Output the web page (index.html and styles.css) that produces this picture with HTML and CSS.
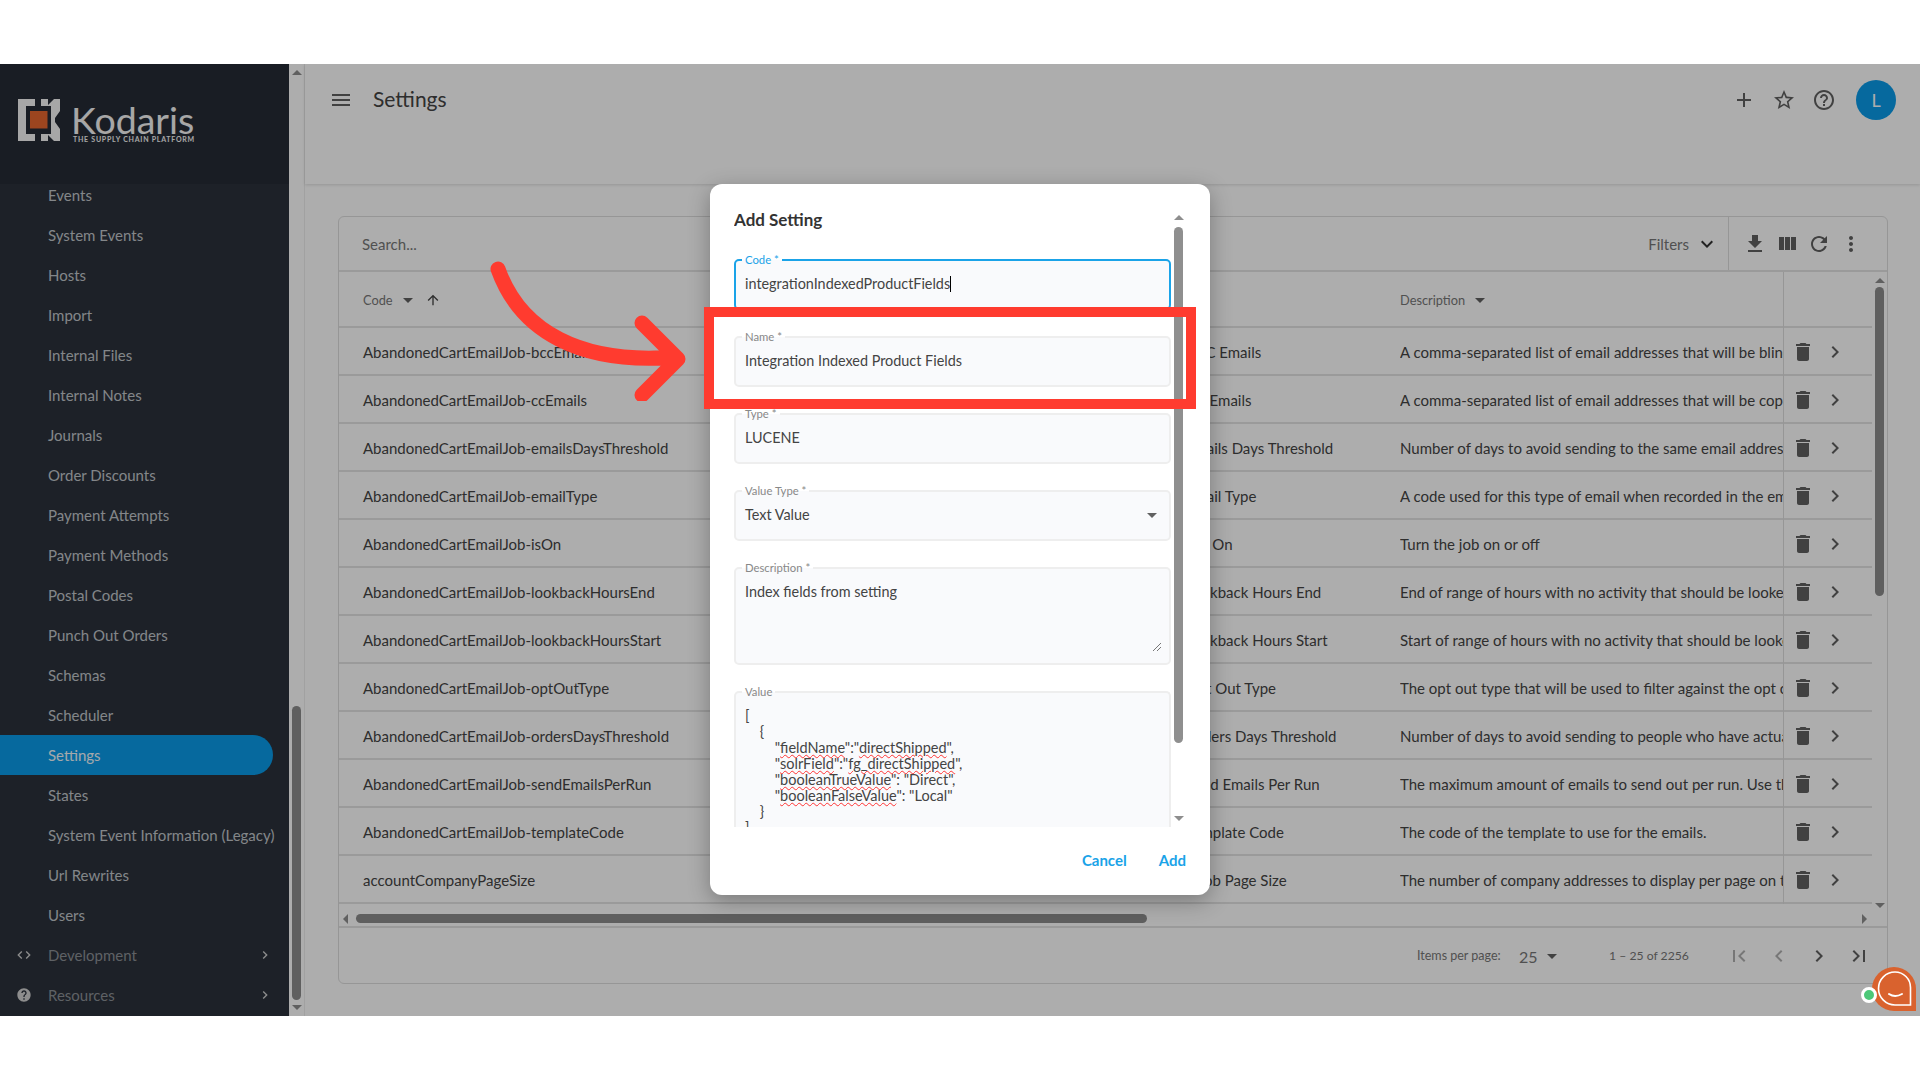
FILE: index.html
```html
<!DOCTYPE html>
<html lang="en">
<head>
    <meta charset="UTF-8">
    <title>Settings - Kodaris</title>
    <link rel="stylesheet" href="styles.css">
</head>
<body>
    <svg class="sprite" xmlns="http://www.w3.org/2000/svg">
        <symbol id="i-menu" viewBox="0 0 24 24"><path d="M3 18h18v-2H3v2zm0-5h18v-2H3v2zm0-7v2h18V6H3z"/></symbol>
        <symbol id="i-add" viewBox="0 0 24 24"><path d="M19 13h-6v6h-2v-6H5v-2h6V5h2v6h6v2z"/></symbol>
        <symbol id="i-star" viewBox="0 0 24 24"><path d="M22 9.24l-7.19-.62L12 2 9.19 8.63 2 9.24l5.46 4.73L5.82 21 12 17.27 18.18 21l-1.63-7.03L22 9.24zM12 15.4l-3.76 2.27 1-4.28-3.32-2.88 4.38-.38L12 6.1l1.71 4.04 4.38.38-3.32 2.88 1 4.28L12 15.4z"/></symbol>
        <symbol id="i-help-o" viewBox="0 0 24 24"><path d="M11 18h2v-2h-2v2zm1-16C6.48 2 2 6.48 2 12s4.48 10 10 10 10-4.48 10-10S17.52 2 12 2zm0 18c-4.41 0-8-3.59-8-8s3.59-8 8-8 8 3.59 8 8-3.59 8-8 8zm0-14c-2.21 0-4 1.79-4 4h2c0-1.1.9-2 2-2s2 .9 2 2c0 2-3 1.75-3 5h2c0-2.25 3-2.5 3-5 0-2.21-1.79-4-4-4z"/></symbol>
        <symbol id="i-help" viewBox="0 0 24 24"><path d="M12 2C6.48 2 2 6.48 2 12s4.48 10 10 10 10-4.48 10-10S17.52 2 12 2zm1 17h-2v-2h2v2zm2.07-7.75l-.9.92C13.45 12.9 13 13.5 13 15h-2v-.5c0-1.1.45-2.1 1.17-2.83l1.24-1.26c.37-.36.59-.86.59-1.41 0-1.1-.9-2-2-2s-2 .9-2 2H8c0-2.21 1.79-4 4-4s4 1.79 4 4c0 .88-.36 1.68-.93 2.25z"/></symbol>
        <symbol id="i-download" viewBox="0 0 24 24"><path d="M19 9h-4V3H9v6H5l7 7 7-7zM5 18v2h14v-2H5z"/></symbol>
        <symbol id="i-columns" viewBox="0 0 24 24"><path d="M10 18h5V5h-5v13zm-6 0h5V5H4v13zM16 5v13h5V5h-5z"/></symbol>
        <symbol id="i-refresh" viewBox="0 0 24 24"><path d="M17.65 6.35C16.2 4.9 14.21 4 12 4c-4.42 0-7.99 3.58-7.99 8s3.57 8 7.99 8c3.73 0 6.84-2.55 7.73-6h-2.08c-.82 2.33-3.04 4-5.65 4-3.31 0-6-2.69-6-6s2.69-6 6-6c1.66 0 3.14.69 4.22 1.78L13 11h7V4l-2.35 2.35z"/></symbol>
        <symbol id="i-more" viewBox="0 0 24 24"><path d="M12 8c1.1 0 2-.9 2-2s-.9-2-2-2-2 .9-2 2 .9 2 2 2zm0 2c-1.1 0-2 .9-2 2s.9 2 2 2 2-.9 2-2-.9-2-2-2zm0 6c-1.1 0-2 .9-2 2s.9 2 2 2 2-.9 2-2-.9-2-2-2z"/></symbol>
        <symbol id="i-delete" viewBox="0 0 24 24"><path d="M6 19c0 1.1.9 2 2 2h8c1.1 0 2-.9 2-2V7H6v12zM19 4h-3.5l-1-1h-5l-1 1H5v2h14V4z"/></symbol>
        <symbol id="i-next" viewBox="0 0 24 24"><path d="M10 6L8.59 7.41 13.17 12l-4.58 4.59L10 18l6-6z"/></symbol>
        <symbol id="i-prev" viewBox="0 0 24 24"><path d="M15.41 7.41L14 6l-6 6 6 6 1.41-1.41L10.83 12z"/></symbol>
        <symbol id="i-expand" viewBox="0 0 24 24"><path d="M16.59 8.59L12 13.17 7.41 8.59 6 10l6 6 6-6z"/></symbol>
        <symbol id="i-up" viewBox="0 0 24 24"><path d="M4 12l1.41 1.41L11 7.83V20h2V7.83l5.58 5.59L20 12l-8-8-8 8z"/></symbol>
        <symbol id="i-first" viewBox="0 0 24 24"><path d="M18.41 16.59L13.82 12l4.59-4.59L17 6l-6 6 6 6zM6 6h2v12H6z"/></symbol>
        <symbol id="i-last" viewBox="0 0 24 24"><path d="M5.59 7.41L10.18 12l-4.59 4.59L7 18l6-6-6-6zM16 6h2v12h-2z"/></symbol>
        <symbol id="i-code" viewBox="0 0 24 24"><path d="M9.4 16.6L4.8 12l4.6-4.6L8 6l-6 6 6 6 1.4-1.4zm5.2 0l4.6-4.6-4.6-4.6L16 6l6 6-6 6-1.4-1.4z"/></symbol>
    </svg>

    <div class="app">
        <aside class="sidebar">
            <div class="side-head">
                <svg class="logo-mark" viewBox="0 0 42 42" width="42" height="42">
                    <path fill="#f6f6f6" d="M0 0h17v7H8v28h9v7H0z"/>
                    <path fill="#f6f6f6" d="M23 0h7v6l6-6h6v12l-5 7v4l5 7v12h-6l-6-6v6h-7v-7h10V7H23z"/>
                    <rect x="12" y="12" width="17.5" height="17.5" fill="#e6662f"/>
                </svg>
                <div class="logo-text">
                    <span class="logo-name">Kodaris</span>
                    <span class="logo-tag">THE SUPPLY CHAIN PLATFORM</span>
                </div>
            </div>
            <nav class="nav">
                <div class="nav-list">
                    <a class="nav-item">Events</a>
                    <a class="nav-item">System Events</a>
                    <a class="nav-item">Hosts</a>
                    <a class="nav-item">Import</a>
                    <a class="nav-item">Internal Files</a>
                    <a class="nav-item">Internal Notes</a>
                    <a class="nav-item">Journals</a>
                    <a class="nav-item">Order Discounts</a>
                    <a class="nav-item">Payment Attempts</a>
                    <a class="nav-item">Payment Methods</a>
                    <a class="nav-item">Postal Codes</a>
                    <a class="nav-item">Punch Out Orders</a>
                    <a class="nav-item">Schemas</a>
                    <a class="nav-item">Scheduler</a>
                    <a class="nav-item active">Settings</a>
                    <a class="nav-item">States</a>
                    <a class="nav-item">System Event Information (Legacy)</a>
                    <a class="nav-item">Url Rewrites</a>
                    <a class="nav-item">Users</a>
                    <a class="nav-item group"><svg class="nav-icon"><use href="#i-code"/></svg>Development<svg class="nav-arrow"><use href="#i-next"/></svg></a>
                    <a class="nav-item group"><svg class="nav-icon"><use href="#i-help"/></svg>Resources<svg class="nav-arrow"><use href="#i-next"/></svg></a>
                </div>
            </nav>
        </aside>

        <div class="side-scroll">
            <span class="tri tri-up"></span>
            <span class="side-thumb"></span>
            <span class="tri tri-down"></span>
        </div>

        <main class="main">
            <header class="topbar">
                <svg class="icon top-menu"><use href="#i-menu"/></svg>
                <h1 class="page-title">Settings</h1>
                <div class="top-actions">
                    <svg class="icon"><use href="#i-add"/></svg>
                    <svg class="icon"><use href="#i-star"/></svg>
                    <svg class="icon"><use href="#i-help-o"/></svg>
                    <span class="avatar">L</span>
                </div>
            </header>

            <section class="card">
                <div class="toolbar">
                    <div class="search-box">
                        <span class="search-text">Search...</span>
                        <span class="filters">Filters<svg class="icon"><use href="#i-expand"/></svg></span>
                    </div>
                    <div class="tools">
                        <svg class="icon"><use href="#i-download"/></svg>
                        <svg class="icon"><use href="#i-columns"/></svg>
                        <svg class="icon"><use href="#i-refresh"/></svg>
                        <svg class="icon"><use href="#i-more"/></svg>
                    </div>
                </div>

                <div class="table-wrap">
                    <div class="table">
                        <div class="row head">
                            <div class="cell">Code <span class="caret"></span><svg class="sort-up"><use href="#i-up"/></svg></div>
                            <div class="cell">Name <span class="caret"></span></div>
                            <div class="cell">Description <span class="caret"></span></div>
                            <div class="cell-actions"></div>
                        </div>
                        <div class="row">
                            <div class="cell">AbandonedCartEmailJob-bccEmails</div>
                            <div class="cell">Abandoned Cart BCC Emails</div>
                            <div class="cell">A comma-separated list of email addresses that will be blind copied</div>
                            <div class="cell-actions"><svg class="icon"><use href="#i-delete"/></svg><svg class="icon"><use href="#i-next"/></svg></div>
                        </div>
                        <div class="row">
                            <div class="cell">AbandonedCartEmailJob-ccEmails</div>
                            <div class="cell">Abandoned Cart CC Emails</div>
                            <div class="cell">A comma-separated list of email addresses that will be copied on</div>
                            <div class="cell-actions"><svg class="icon"><use href="#i-delete"/></svg><svg class="icon"><use href="#i-next"/></svg></div>
                        </div>
                        <div class="row">
                            <div class="cell">AbandonedCartEmailJob-emailsDaysThreshold</div>
                            <div class="cell">Abandoned Cart Emails Days Threshold</div>
                            <div class="cell">Number of days to avoid sending to the same email address again</div>
                            <div class="cell-actions"><svg class="icon"><use href="#i-delete"/></svg><svg class="icon"><use href="#i-next"/></svg></div>
                        </div>
                        <div class="row">
                            <div class="cell">AbandonedCartEmailJob-emailType</div>
                            <div class="cell">Abandoned Cart Email Type</div>
                            <div class="cell">A code used for this type of email when recorded in the email log</div>
                            <div class="cell-actions"><svg class="icon"><use href="#i-delete"/></svg><svg class="icon"><use href="#i-next"/></svg></div>
                        </div>
                        <div class="row">
                            <div class="cell">AbandonedCartEmailJob-isOn</div>
                            <div class="cell">Abandoned Cart Job On</div>
                            <div class="cell">Turn the job on or off</div>
                            <div class="cell-actions"><svg class="icon"><use href="#i-delete"/></svg><svg class="icon"><use href="#i-next"/></svg></div>
                        </div>
                        <div class="row">
                            <div class="cell">AbandonedCartEmailJob-lookbackHoursEnd</div>
                            <div class="cell">Abandoned Cart Lookback Hours End</div>
                            <div class="cell">End of range of hours with no activity that should be looked at for</div>
                            <div class="cell-actions"><svg class="icon"><use href="#i-delete"/></svg><svg class="icon"><use href="#i-next"/></svg></div>
                        </div>
                        <div class="row">
                            <div class="cell">AbandonedCartEmailJob-lookbackHoursStart</div>
                            <div class="cell">Abandoned Cart Lookback Hours Start</div>
                            <div class="cell">Start of range of hours with no activity that should be looked at for</div>
                            <div class="cell-actions"><svg class="icon"><use href="#i-delete"/></svg><svg class="icon"><use href="#i-next"/></svg></div>
                        </div>
                        <div class="row">
                            <div class="cell">AbandonedCartEmailJob-optOutType</div>
                            <div class="cell">Abandoned Cart Opt Out Type</div>
                            <div class="cell">The opt out type that will be used to filter against the opt out list</div>
                            <div class="cell-actions"><svg class="icon"><use href="#i-delete"/></svg><svg class="icon"><use href="#i-next"/></svg></div>
                        </div>
                        <div class="row">
                            <div class="cell">AbandonedCartEmailJob-ordersDaysThreshold</div>
                            <div class="cell">Abandoned Cart Orders Days Threshold</div>
                            <div class="cell">Number of days to avoid sending to people who have actually ordered</div>
                            <div class="cell-actions"><svg class="icon"><use href="#i-delete"/></svg><svg class="icon"><use href="#i-next"/></svg></div>
                        </div>
                        <div class="row">
                            <div class="cell">AbandonedCartEmailJob-sendEmailsPerRun</div>
                            <div class="cell">Abandoned Cart Send Emails Per Run</div>
                            <div class="cell">The maximum amount of emails to send out per run. Use this to limit</div>
                            <div class="cell-actions"><svg class="icon"><use href="#i-delete"/></svg><svg class="icon"><use href="#i-next"/></svg></div>
                        </div>
                        <div class="row">
                            <div class="cell">AbandonedCartEmailJob-templateCode</div>
                            <div class="cell">Abandoned Cart Template Code</div>
                            <div class="cell">The code of the template to use for the emails.</div>
                            <div class="cell-actions"><svg class="icon"><use href="#i-delete"/></svg><svg class="icon"><use href="#i-next"/></svg></div>
                        </div>
                        <div class="row">
                            <div class="cell">accountCompanyPageSize</div>
                            <div class="cell">Account Company Job Page Size</div>
                            <div class="cell">The number of company addresses to display per page on the account</div>
                            <div class="cell-actions"><svg class="icon"><use href="#i-delete"/></svg><svg class="icon"><use href="#i-next"/></svg></div>
                        </div>
                    </div>
                    <div class="table-scroll">
                        <span class="tri tri-up"></span>
                        <span class="table-thumb"></span>
                        <span class="tri tri-down"></span>
                    </div>
                </div>

                <div class="h-scroll">
                    <span class="tri tri-left"></span>
                    <span class="h-thumb"></span>
                    <span class="tri tri-right"></span>
                </div>

                <div class="pager">
                    <span class="pager-label">Items per page:</span>
                    <span class="pager-size">25</span>
                    <span class="caret pager-caret"></span>
                    <span class="pager-range">1 – 25 of 2256</span>
                    <svg class="icon off"><use href="#i-first"/></svg>
                    <svg class="icon off"><use href="#i-prev"/></svg>
                    <svg class="icon"><use href="#i-next"/></svg>
                    <svg class="icon"><use href="#i-last"/></svg>
                </div>
            </section>
        </main>

        <div class="backdrop"></div>

        <div class="modal">
            <div class="modal-body">
                <div class="modal-content">
                    <h2 class="modal-title">Add Setting</h2>
                    <div class="field focus">
                        <label>Code *</label>
                        <div class="value">integrationIndexedProductFields<span class="text-caret"></span></div>
                    </div>
                    <div class="field">
                        <label>Name *</label>
                        <div class="value">Integration Indexed Product Fields</div>
                    </div>
                    <div class="field">
                        <label>Type *</label>
                        <div class="value">LUCENE</div>
                    </div>
                    <div class="field select">
                        <label>Value Type *</label>
                        <div class="value">Text Value</div>
                        <span class="caret"></span>
                    </div>
                    <div class="field area">
                        <label>Description *</label>
                        <div class="value">Index fields from setting</div>
                        <svg class="grip" width="8" height="8" viewBox="0 0 8 8"><path d="M0 8L8 0M4 8L8 4" stroke="#777" fill="none"/></svg>
                    </div>
                    <div class="field code">
                        <label>Value</label>
<pre class="value">[
    {
        "<u>fieldName</u>":"<u>directShipped</u>",
        "<u>solrField</u>":"<u>fg_directShipped</u>",
        "<u>booleanTrueValue</u>": "Direct",
        "<u>booleanFalseValue</u>": "Local"
    }
]</pre>
                    </div>
                </div>
                <div class="modal-scroll">
                    <span class="tri tri-up"></span>
                    <span class="modal-thumb"></span>
                    <span class="tri tri-down"></span>
                </div>
            </div>
            <div class="modal-actions">
                <a class="action">Cancel</a>
                <a class="action">Add</a>
            </div>
        </div>

        <!-- callout drawn on top of the shot -->
        <div class="callout-box"></div>
        <svg class="callout-arrow" viewBox="0 0 200 140" width="200" height="140">
            <path d="M8 8C30 70 90 104 186 96M152 62L188 98L152 134" fill="none" stroke="#ff3b2f" stroke-width="15" stroke-linecap="round" stroke-linejoin="round"/>
        </svg>

        <div class="chat">
            <span class="chat-dot"></span>
            <svg class="chat-bubble" viewBox="0 0 44 44" width="44" height="44">
                <path fill="#d9622e" d="M22 0a22 22 0 0 1 22 22v22H22a22 22 0 0 1 0-44z"/>
                <path fill="none" stroke="#fff" stroke-width="1.6" d="M23 5a15.5 15.5 0 0 1 15.5 15.5V38H23a16.5 16.5 0 0 1 0-33z"/>
                <path fill="none" stroke="#fff" stroke-width="2" stroke-linecap="round" d="M17 27q6 4 13 0"/>
            </svg>
        </div>
    </div>
</body>
</html>
```

FILE: styles.css
```css
* {
    box-sizing: border-box;
}
body {
    margin: 0;
    background: #fff;
    font-family: 'Lato', 'Open Sans', sans-serif;
    font-size: 15px;
    color: #444;
    overflow: hidden;
}
.sprite {
    display: none;
}
.icon {
    width: 24px;
    height: 24px;
    fill: #616161;
    flex: none;
}
.app {
    position: relative;
    display: flex;
    margin-top: 64px;
    height: 952px;
    background: #fff;
    overflow: hidden;
}

/* sidebar */
.sidebar {
    width: 289px;
    flex: none;
    display: flex;
    flex-direction: column;
    background: #2b323c;
}
.side-head {
    position: relative;
    z-index: 1;
    height: 120px;
    flex: none;
    display: flex;
    gap: 11px;
    padding: 35px 0 0 18px;
    background: #252b35;
}
.logo-mark {
    flex: none;
}
.logo-text {
    display: flex;
    flex-direction: column;
    width: 122px;
}
.logo-name {
    font-size: 37.5px;
    line-height: 36px;
    margin-top: 3px;
    color: #f6f6f6;
}
.logo-tag {
    margin-top: -3px;
    margin-left: 2px;
    font-size: 7px;
    line-height: 9px;
    font-weight: 700;
    letter-spacing: .75px;
    white-space: nowrap;
    color: #f6f6f6;
}
.nav {
    flex: 1;
    overflow: hidden;
}
.nav-list {
    margin-top: -9px;
}
.nav-item {
    display: flex;
    align-items: center;
    height: 40px;
    padding-left: 48px;
    font-size: 15px;
    white-space: nowrap;
    color: #c2c6cb;
    position: relative;
}
.nav-item.active {
    width: 273px;
    background: #0a9be9;
    border-radius: 0 20px 20px 0;
    color: #f2f8fc;
}
.nav-item.group {
    color: #8b9096;
}
.nav-icon {
    position: absolute;
    left: 16px;
    top: 12px;
    width: 16px;
    height: 16px;
    fill: #d0d0d0;
}
.nav-arrow {
    position: absolute;
    right: 16px;
    top: 12px;
    width: 16px;
    height: 16px;
    fill: #d0d0d0;
}

/* scrollbars */
.tri {
    display: block;
    width: 0;
    height: 0;
    flex: none;
    border-style: solid;
    border-color: transparent;
}
.tri-up {
    border-width: 0 5px 5px;
    border-bottom-color: #8e8e8e;
}
.tri-down {
    border-width: 5px 5px 0;
    border-top-color: #8e8e8e;
}
.tri-left {
    border-width: 5px 5px 5px 0;
    border-right-color: #8e8e8e;
}
.tri-right {
    border-width: 5px 0 5px 5px;
    border-left-color: #8e8e8e;
}
.side-scroll {
    width: 16px;
    flex: none;
    display: flex;
    flex-direction: column;
    align-items: center;
    padding: 6px 0;
    background: #fff;
    border-right: 1px solid #eee;
}
.side-thumb {
    width: 9px;
    height: 294px;
    margin-top: auto;
    margin-bottom: 5px;
    border-radius: 5px;
    background: #8c8c8c;
}

/* main */
.main {
    flex: 1;
    min-width: 0;
    display: flex;
    flex-direction: column;
}
.topbar {
    height: 120px;
    flex: none;
    display: flex;
    align-items: flex-start;
    padding: 24px 24px 0 24px;
    background: #fff;
    box-shadow: 0 1px 3px rgba(0, 0, 0, .14);
}
.page-title {
    margin: -1px 0 0 20px;
    font-size: 21px;
    line-height: 24px;
    font-weight: 400;
    color: #444;
}
.top-actions {
    margin-left: auto;
    margin-top: -8px;
    display: flex;
    align-items: center;
    gap: 16px;
}
.avatar {
    width: 40px;
    height: 40px;
    margin-left: 4px;
    border-radius: 50%;
    background: #0a9be9;
    color: #fff;
    display: flex;
    align-items: center;
    justify-content: center;
    font-size: 18px;
}
.card {
    margin: 32px 32px 0 33px;
    height: 768px;
    display: flex;
    flex-direction: column;
    border: 1px solid #ddd;
    border-radius: 6px;
}
.toolbar {
    height: 55px;
    flex: none;
    display: flex;
    border-bottom: 2px solid #e4e4e4;
}
.search-box {
    flex: 1;
    display: flex;
    align-items: center;
    justify-content: space-between;
    padding: 0 9px 0 23px;
    border-right: 1px solid #ddd;
    color: #777;
    font-size: 15px;
}
.filters {
    display: flex;
    align-items: center;
    gap: 6px;
}
.filters .icon {
    fill: #333;
}
.tools {
    width: 158px;
    flex: none;
    display: flex;
    align-items: center;
    padding-left: 14px;
    gap: 8px;
}
.table-wrap {
    height: 632px;
    flex: none;
    display: flex;
}
.table {
    width: 1533px;
    flex: none;
}
.row {
    display: grid;
    grid-template-columns: 735px 326px 383px 89px;
    grid-template-rows: 44px;
    height: 48px;
    padding-top: 2px;
    border-bottom: 2px solid #e4e4e4;
    align-items: center;
}
.row.head {
    grid-template-rows: 52px;
    height: 56px;
    font-size: 12.8px;
    color: #777;
}
.cell {
    padding-left: 24px;
    white-space: pre;
    overflow: hidden;
    display: flex;
    align-items: center;
}
.row .cell:nth-child(2),
.row .cell:nth-child(3) {
    padding-left: 0;
}
.cell-actions {
    align-self: start;
    height: 48px;
    margin-top: -2px;
    display: flex;
    align-items: center;
    gap: 8px;
    padding-left: 7px;
    border-left: 1px solid #ddd;
}
.row.head .cell-actions {
    height: 56px;
}
.caret {
    display: inline-block;
    width: 0;
    height: 0;
    margin-left: 7px;
    border-style: solid;
    border-width: 5px 5px 0;
    border-color: #616161 transparent transparent;
}
.sort-up {
    width: 16px;
    height: 16px;
    margin-left: 12px;
    fill: #444;
}
.table-scroll {
    flex: 1;
    display: flex;
    flex-direction: column;
    align-items: center;
    padding: 6px 0 0;
}
.table-scroll .tri-down {
    margin-bottom: -4px;
}
.table-thumb {
    width: 9px;
    height: 309px;
    margin-top: 4px;
    margin-bottom: auto;
    border-radius: 5px;
    background: #8c8c8c;
}
.h-scroll {
    height: 24px;
    flex: none;
    display: flex;
    align-items: center;
    padding: 7px 20px 0 4px;
    border-bottom: 2px solid #e4e4e4;
    gap: 8px;
}
.h-thumb {
    width: 791px;
    height: 9px;
    margin-right: auto;
    border-radius: 5px;
    background: #8c8c8c;
}
.pager {
    flex: 1;
    display: flex;
    align-items: center;
    padding: 1px 0 0 1078px;
    color: #777;
}
.pager .icon {
    margin-right: 16px;
}
.pager .off {
    fill: #b0b0b0;
}
.pager-label {
    font-size: 12.5px;
    width: 102px;
    margin-top: -2px;
}
.pager-size {
    font-size: 16px;
    width: 23px;
}
.pager-caret {
    margin-left: 5px;
}
.pager-range {
    font-size: 12.2px;
    width: 118px;
    margin-left: 52px;
    margin-top: -2px;
}

/* modal layer */
.backdrop {
    position: absolute;
    z-index: 2;
    inset: 0;
    background: rgba(0, 0, 0, .32);
}
.modal {
    position: absolute;
    z-index: 3;
    left: 710px;
    top: 120px;
    width: 500px;
    height: 711px;
    display: flex;
    flex-direction: column;
    padding-top: 24px;
    background: #fff;
    border-radius: 12px;
    box-shadow: 0 6px 22px rgba(0, 0, 0, .3);
}
.modal-body {
    height: 619px;
    flex: none;
    display: flex;
    padding-left: 24px;
}
.modal-content {
    width: 437px;
    flex: none;
    overflow: hidden;
}
.modal-title {
    margin: 0 0 27px;
    font-size: 17px;
    line-height: 24px;
    font-weight: 700;
    color: #333;
}
.field {
    position: relative;
    height: 51px;
    margin-bottom: 26px;
    padding: 0 9px;
    border: 2px solid #eeeeee;
    border-radius: 5px;
    background: #f9fafc;
}
.field label {
    position: absolute;
    left: 6px;
    top: -8px;
    padding: 0 3px;
    font-size: 11.3px;
    line-height: 14px;
    color: #888;
    background: linear-gradient(#fff 50%, #f9fafc 50%);
}
.value {
    padding-top: 13px;
    line-height: 20px;
    font-size: 14.4px;
    color: #444;
}
.field.focus {
    border-color: #1aa3e8;
}
.field.focus label {
    color: #1aa3e8;
}
.text-caret {
    display: inline-block;
    width: 1px;
    height: 16px;
    vertical-align: -3px;
    background: #000;
}
.field.select .caret {
    position: absolute;
    right: 12px;
    top: 21px;
    margin: 0;
}
.field.area {
    height: 98px;
}
.grip {
    position: absolute;
    right: 8px;
    bottom: 12px;
}
.field.code {
    height: 200px;
    margin-bottom: 0;
    border-bottom: 0;
}
.field.code pre {
    margin: 0;
    padding-top: 15px;
    line-height: 16px;
    font-family: inherit;
    font-size: 14.5px;
    white-space: pre;
}
.field.code u {
    text-decoration: underline wavy #ff3333 1px;
    text-underline-offset: 1px;
}
.modal-scroll {
    width: 13px;
    margin-left: 1px;
    flex: none;
    display: flex;
    flex-direction: column;
    align-items: center;
    padding: 7px 0 6px;
}
.modal-thumb {
    width: 9px;
    height: 516px;
    margin-top: 7px;
    margin-bottom: auto;
    border-radius: 5px;
    background: #8f8f8f;
}
.modal-actions {
    flex: 1;
    display: flex;
    justify-content: flex-end;
    align-items: flex-start;
    gap: 32px;
    padding: 23px 24px 0 0;
}
.action {
    font-size: 15px;
    line-height: 20px;
    font-weight: 700;
    color: #1aa3e8;
}
.callout-box {
    position: absolute;
    z-index: 4;
    left: 704px;
    top: 243px;
    width: 492px;
    height: 102px;
    border: 10px solid #ff3b2f;
}
.callout-arrow {
    position: absolute;
    z-index: 4;
    left: 490px;
    top: 197px;
}
.chat {
    position: absolute;
    z-index: 4;
    left: 1860px;
    top: 903px;
    width: 56px;
    height: 44px;
}
.chat-bubble {
    position: absolute;
    left: 12px;
    top: 0;
}
.chat-dot {
    position: absolute;
    z-index: 1;
    left: 1px;
    top: 20px;
    width: 16px;
    height: 16px;
    border-radius: 50%;
    border: 3px solid #fff;
    background: #4cc878;
}
```
